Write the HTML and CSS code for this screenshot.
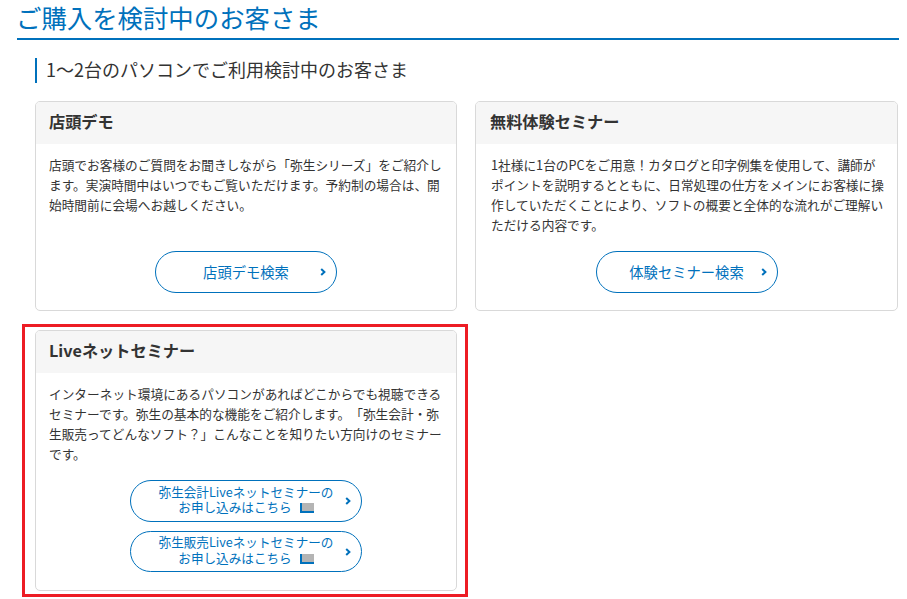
FILE: index.html
```html
<!DOCTYPE html>
<html lang="ja">
<head>
<meta charset="utf-8">
<title>ご購入を検討中のお客さま</title>
<link rel="stylesheet" href="styles.css">
</head>
<body>
<main class="page">
  <h1 class="title">ご購入を検討中のお客さま</h1>
  <h2 class="subtitle">1～2台のパソコンでご利用検討中のお客さま</h2>
  <div class="cards">
    <section class="card">
      <h3 class="card-head">店頭デモ</h3>
      <div class="card-body">
        <p class="card-text">店頭でお客様のご質問をお聞きしながら「弥生シリーズ」をご紹介し<br>ます。実演時間中はいつでもご覧いただけます。予約制の場合は、開<br>始時間前に会場へお越しください。</p>
        <div class="actions">
          <a class="btn btn-single" href="#"><span>店頭デモ検索</span><svg class="chev" viewBox="0 0 6 8"><path d="M1.2 1 4.4 4 1.2 7" /></svg></a>
        </div>
      </div>
    </section>
    <section class="card card-right">
      <h3 class="card-head">無料体験セミナー</h3>
      <div class="card-body">
        <p class="card-text">1社様に1台のPCをご用意！カタログと印字例集を使用して、講師が<br>ポイントを説明するとともに、日常処理の仕方をメインにお客様に操<br>作していただくことにより、ソフトの概要と全体的な流れがご理解い<br>ただける内容です。</p>
        <div class="actions">
          <a class="btn btn-single" href="#"><span>体験セミナー検索</span><svg class="chev" viewBox="0 0 6 8"><path d="M1.2 1 4.4 4 1.2 7" /></svg></a>
        </div>
      </div>
    </section>
    <section class="card card-live">
      <h3 class="card-head">Liveネットセミナー</h3>
      <div class="card-body">
        <p class="card-text">インターネット環境にあるパソコンがあればどこからでも視聴できる<br>セミナーです。弥生の基本的な機能をご紹介します。「弥生会計・弥<br>生販売ってどんなソフト？」こんなことを知りたい方向けのセミナー<br>です。</p>
        <div class="actions actions-live">
          <a class="btn btn-double" href="#"><span>弥生会計Liveネットセミナーの<br>お申し込みはこちら<i class="ext"></i></span><svg class="chev" viewBox="0 0 6 8"><path d="M1.2 1 4.4 4 1.2 7" /></svg></a>
          <a class="btn btn-double" href="#"><span>弥生販売Liveネットセミナーの<br>お申し込みはこちら<i class="ext"></i></span><svg class="chev" viewBox="0 0 6 8"><path d="M1.2 1 4.4 4 1.2 7" /></svg></a>
        </div>
      </div>
      <div class="highlight"></div>
    </section>
  </div>
</main>
</body>
</html>
```
FILE: styles.css
```css
* { box-sizing: border-box; }
html, body { margin: 0; padding: 0; }
body {
  background: #fff;
  color: #333;
  font-family: "Noto Sans CJK JP", "Noto Sans", sans-serif;
  text-spacing-trim: space-all;
}
.page { padding: 0 8px 8px 17px; }
.title {
  margin: 0;
  height: 40px;
  border-bottom: 2px solid #0071bc;
  color: #0071bc;
  font-size: 25.4px;
  font-weight: 400;
  line-height: 34px;
  text-indent: -1px;
}
.subtitle {
  margin: 18px 0 18px 18px;
  height: 25px;
  padding-left: 9px;
  border-left: 2px solid #0071bc;
  color: #333;
  font-size: 18px;
  font-weight: 400;
  line-height: 22px;
}
.cards {
  display: grid;
  grid-template-columns: 422px 423px;
  grid-template-rows: 210px 261px;
  column-gap: 18px;
  row-gap: 19px;
  margin-left: 18px;
}
.card {
  position: relative;
  display: flex;
  flex-direction: column;
  border: 1px solid #d9d9d9;
  border-radius: 5px;
  background: #fff;
}
.card-head {
  margin: 0;
  height: 42px;
  padding-left: 13px;
  background: #f6f6f6;
  border-radius: 4px 4px 0 0;
  color: #333;
  font-size: 16.2px;
  font-weight: 700;
  line-height: 39px;
}
.card-right .card-head { padding-left: 14px; }
.card-body {
  flex: 1;
  display: flex;
  flex-direction: column;
  padding: 11px 13px 17px;
}
.card-text {
  margin: 0;
  font-size: 12.7px;
  line-height: 20px;
  color: #333;
  white-space: nowrap;
}
.card-right .card-text { margin-left: 2px; }
.actions {
  margin-top: auto;
  display: flex;
  flex-direction: column;
  align-items: center;
  gap: 9px;
}
.actions-live { margin-bottom: 1px; }
.btn {
  position: relative;
  display: flex;
  align-items: center;
  justify-content: center;
  width: 182px;
  height: 42px;
  border: 1px solid #0071bc;
  border-radius: 21px;
  background: #fff;
  color: #0071bc;
  font-size: 14.3px;
  line-height: 19px;
  text-align: center;
  text-decoration: none;
}
.btn-single span { position: relative; top: -1px; }
.btn-double { width: 232px; height: 41px; font-size: 12.6px; line-height: 15.5px; }
.btn-double:first-child { height: 42px; }
.btn-double span { position: relative; top: -2px; }
.chev {
  position: absolute;
  right: 10px;
  top: 50%;
  width: 6px;
  height: 8px;
  margin-top: -4px;
  fill: none;
  stroke: #0071bc;
  stroke-width: 2;
}
.ext {
  display: inline-block;
  width: 14px;
  height: 10px;
  margin-left: 8px;
  vertical-align: -1px;
  background: #b4b4b4;
  border-left: 2px solid #0071bc;
  border-bottom: 2px solid #0071bc;
}
.highlight {
  position: absolute;
  left: -14px;
  top: -7px;
  right: -12px;
  bottom: -7px;
  border: 3px solid #ed1c24;
  pointer-events: none;
}
```
